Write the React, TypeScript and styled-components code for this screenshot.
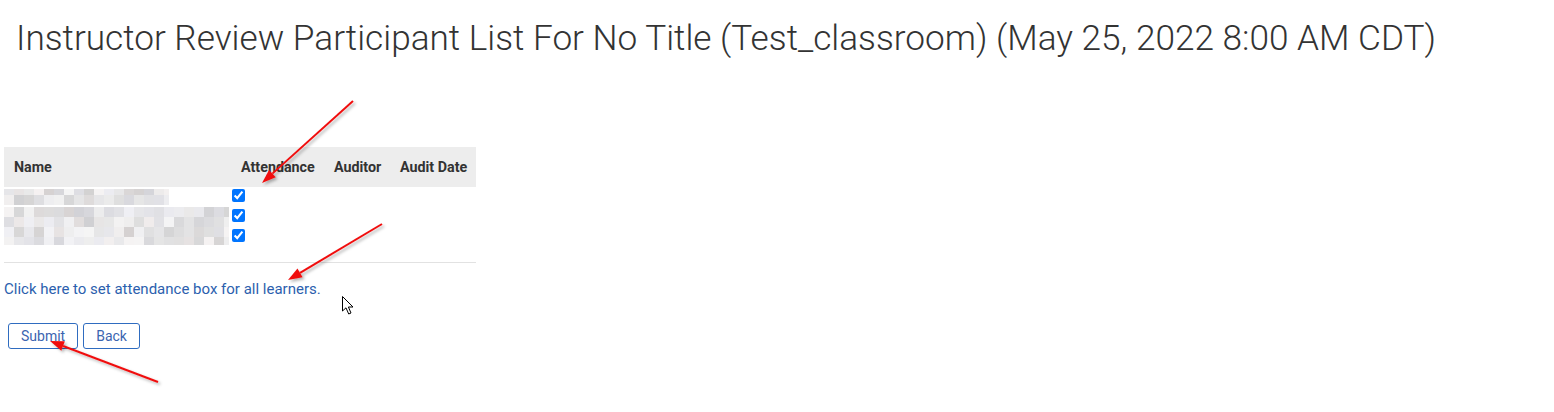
import React from "react";
import styled, { createGlobalStyle } from "styled-components";

const GlobalStyle = createGlobalStyle`
  html, body { margin: 0; padding: 0; background: #ffffff; }
  body { font-family: Roboto, "Liberation Sans", Arial, sans-serif; color: #333333; }
`;

const Page = styled.div`
  position: relative;
  width: 1554px;
  height: 412px;
  padding-left: 4px;
  box-sizing: border-box;
  overflow: hidden;
`;

const Title = styled.h1`
  margin: 17px 0 0 12px;
  font-family: Roboto, "Liberation Sans", sans-serif;
  font-weight: 300;
  font-size: 35.2px;
  line-height: 42px;
  color: #333333;
  white-space: nowrap;
`;

const Table = styled.table`
  margin-top: 88px;
  width: 472px;
  border-collapse: collapse;
  border-spacing: 0;
  table-layout: fixed;
`;

const HeadRow = styled.tr`
  background: #ededed;
  height: 40px;
`;

const Th = styled.th<{ $w: number }>`
  width: ${(p) => p.$w}px;
  padding: 0 10px 1px;
  box-sizing: border-box;
  text-align: left;
  font-family: Roboto, "Liberation Sans", sans-serif;
  font-weight: 700;
  font-size: 14.3px;
  color: #333333;
  white-space: nowrap;
`;

const Row = styled.tr`
  height: 20px;
`;

const Td = styled.td`
  padding: 0;
  vertical-align: top;
`;

const CheckCell = styled.td`
  padding: 2px 0 0 1px;
  vertical-align: top;
`;

const Check = styled.input`
  margin: 0;
  width: 13px;
  height: 13px;
  display: block;
`;

const Mosaic = styled.div<{ $top: number; $w: number }>`
  display: flex;
  flex-direction: column;
  width: ${(p) => p.$w}px;
  overflow: hidden;
  margin-top: ${(p) => p.$top}px;
`;

const MosaicRow = styled.div<{ $h: number }>`
  display: flex;
  height: ${(p) => p.$h}px;
`;

const Tile = styled.div`
  width: 10px;
  height: 100%;
  flex: none;
`;

const Divider = styled.div`
  margin-top: 15px;
  width: 472px;
  height: 1px;
  background: #e2e2e2;
`;

const Link = styled.a`
  display: block;
  margin-top: 16px;
  font-family: Roboto, "Liberation Sans", sans-serif;
  font-size: 15px;
  line-height: 20px;
  color: #2c5fae;
  text-decoration: none;
  cursor: pointer;
`;

const Buttons = styled.div`
  display: flex;
  gap: 5px;
  margin: 24px 0 0 4px;
`;

const Button = styled.button`
  height: 26px;
  padding: 0 12px;
  border: 1px solid #2f6cc0;
  border-radius: 3px;
  background: #ffffff;
  font-family: Roboto, "Liberation Sans", sans-serif;
  font-size: 14px;
  color: #3b64b0;
  cursor: pointer;
`;

const Overlay = styled.svg`
  position: absolute;
  left: 0;
  top: 0;
  pointer-events: none;
`;

function rng(seed: number) {
  let s = seed;
  return () => {
    s = (s * 1103515245 + 12345) & 0x7fffffff;
    return s / 0x7fffffff;
  };
}

function tileColor(r: () => number) {
  const base = 208 + Math.floor(r() * 38);
  const tint = Math.floor((r() - 0.5) * 10);
  const rr = Math.min(245, base + (tint > 0 ? tint : 0));
  const bb = Math.min(245, base + (tint < 0 ? -tint : 0));
  return `rgb(${rr},${base},${bb})`;
}

function Blur({ seed, width, heights, top }: { seed: number; width: number; heights: number[]; top: number }) {
  const r = rng(seed);
  const cols = Math.ceil(width / 10);
  return (
    <Mosaic $top={top} $w={width}>
      {heights.map((h, i) => (
        <MosaicRow key={i} $h={h}>
          {Array.from({ length: cols }).map((_, j) => (
            <Tile key={j} style={{ background: tileColor(r) }} />
          ))}
        </MosaicRow>
      ))}
    </Mosaic>
  );
}

function Arrow({ x1, y1, x2, y2 }: { x1: number; y1: number; x2: number; y2: number }) {
  const dx = x2 - x1;
  const dy = y2 - y1;
  const len = Math.hypot(dx, dy);
  const ux = dx / len;
  const uy = dy / len;
  const hl = 14;
  const hw = 5;
  const bx = x2 - ux * hl;
  const by = y2 - uy * hl;
  const p1 = `${bx - uy * hw},${by + ux * hw}`;
  const p2 = `${bx + uy * hw},${by - ux * hw}`;
  return (
    <g filter="url(#shadow)">
      <line x1={x1} y1={y1} x2={bx} y2={by} stroke="#f01010" strokeWidth={2} />
      <polygon points={`${x2},${y2} ${p1} ${p2}`} fill="#f01010" />
    </g>
  );
}

export default function App() {
  const rows = [
    { seed: 7, width: 165, heights: [6, 10], top: 2 },
    { seed: 31, width: 225, heights: [10, 10], top: 0 },
    { seed: 97, width: 225, heights: [10, 8], top: 0 },
  ];
  return (
    <Page>
      <GlobalStyle />
      <Title>Instructor Review Participant List For No Title (Test_classroom) (May 25, 2022 8:00 AM CDT)</Title>
      <Table>
        <thead>
          <HeadRow>
            <Th $w={227}>Name</Th>
            <Th $w={93}>Attendance</Th>
            <Th $w={66}>Auditor</Th>
            <Th $w={86}>Audit Date</Th>
          </HeadRow>
        </thead>
        <tbody>
          {rows.map((r, i) => (
            <Row key={i}>
              <Td>
                <Blur seed={r.seed} width={r.width} heights={r.heights} top={r.top} />
              </Td>
              <CheckCell>
                <Check type="checkbox" defaultChecked />
              </CheckCell>
              <Td />
              <Td />
            </Row>
          ))}
        </tbody>
      </Table>
      <Divider />
      <Link>Click here to set attendance box for all learners.</Link>
      <Buttons>
        <Button>Submit</Button>
        <Button>Back</Button>
      </Buttons>
      <Overlay width={1554} height={412} viewBox="0 0 1554 412">
        <defs>
          <filter id="shadow" x="-20%" y="-20%" width="140%" height="140%">
            <feDropShadow dx="2" dy="2" stdDeviation="1.5" floodColor="#000" floodOpacity="0.3" />
          </filter>
        </defs>
        <Arrow x1={353} y1={101} x2={262} y2={183} />
        <Arrow x1={382} y1={224} x2={288} y2={280} />
        <Arrow x1={158} y1={382} x2={50} y2={341} />
        <path
          d="M342.5 296.5 L342.5 311 L346 307.8 L348.7 314 L351 313 L348.4 307 L353 307 Z"
          fill="#ffffff"
          stroke="#000000"
          strokeWidth={1}
          strokeLinejoin="round"
        />
      </Overlay>
    </Page>
  );
}
